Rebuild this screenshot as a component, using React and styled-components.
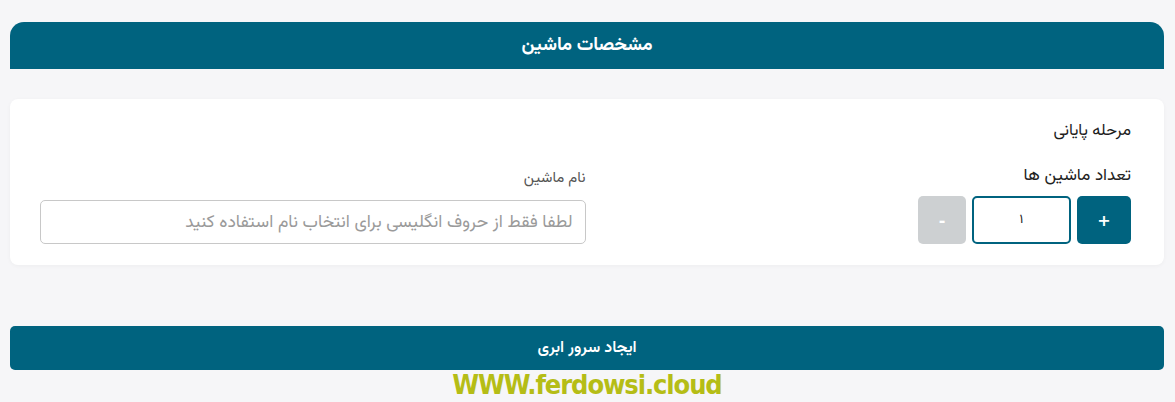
import React, { useState } from 'react'
import styled, { createGlobalStyle } from 'styled-components';

const GlobalStyle = createGlobalStyle`
    body {
        margin: 0;
        background-color: #f6f6f8;
        font-family: 'Vazirmatn', 'DejaVu Sans', 'Noto Sans', sans-serif;
    }
`;

const PageContainer = styled.div`
    direction: rtl;
    padding: 22px 11px 0 10px;
    box-sizing: border-box;
    width: 1175px;
`;

const SectionHeader = styled.div`
    height: 47px;
    background-color: #00637f;
    border-radius: 14px 14px 0 0;
    display: flex;
    align-items: center;
    justify-content: center;
    color: #ffffff;
    font-size: 18.5px;
    font-weight: 700;
`;

const Card = styled.div`
    margin-top: 30px;
    background-color: #ffffff;
    border-radius: 8px;
    box-shadow: 0 1px 4px rgba(0, 0, 0, 0.04);
    padding: 20px 33px 21px 30px;
`;

const StepTitle = styled.div`
    font-size: 16.5px;
    font-weight: 400;
    color: #1c1c1c;
    line-height: 24px;
    margin-bottom: 21px;
`;

const FieldsGrid = styled.div`
    display: grid;
    grid-template-columns: 1fr 1fr;
    align-items: end;
`;

const Field = styled.div`
    display: flex;
    flex-direction: column;
    align-items: stretch;
`;

const Label = styled.label`
    font-size: ${p => p.$small ? '15px' : '17px'};
    font-weight: 400;
    color: ${p => p.$small ? '#555' : '#222'};
    line-height: 24px;
    margin-bottom: ${p => p.$small ? '9px' : '8px'};
`;

const Stepper = styled.div`
    display: flex;
    gap: 6px;
`;

const StepButton = styled.button`
    width: ${p => p.$wide ? '54px' : '48px'};
    height: 48px;
    border: none;
    border-radius: 5px;
    background-color: ${p => p.$disabled ? '#cdd0d2' : '#00637f'};
    color: #ffffff;
    font-size: 16px;
    font-weight: 700;
    font-family: 'DejaVu Sans', sans-serif;
    cursor: pointer;
    padding: 0;
`;

const CountInput = styled.input`
    width: 99px;
    height: 48px;
    box-sizing: border-box;
    border: 2px solid #00637f;
    border-radius: 5px;
    text-align: center;
    font-size: 13px;
    color: #222;
    font-family: inherit;
    outline: none;
`;

const TextInput = styled.input`
    height: 44px;
    box-sizing: border-box;
    border: 1px solid #c8c8c8;
    border-radius: 5px;
    padding: 0 12px;
    font-size: 17.5px;
    font-family: inherit;
    direction: rtl;
    outline: none;
    &::placeholder {
        color: #9a9a9a;
    }
`;

const SubmitButton = styled.button`
    display: block;
    width: 100%;
    margin-top: 61px;
    height: 44px;
    border: none;
    border-radius: 5px;
    background-color: #00637f;
    color: #ffffff;
    font-size: 16px;
    font-weight: 600;
    font-family: inherit;
    cursor: pointer;
`;

const Watermark = styled.div`
    direction: ltr;
    text-align: center;
    font-family: 'DejaVu Sans Condensed', 'DejaVu Sans', sans-serif;
    font-weight: 700;
    font-size: 27px;
    letter-spacing: -1.1px;
    line-height: 28px;
    color: #b5bd16;
    margin-top: 1px;
`;

const App = () => {
    const [count, setCount] = useState(1);
    const [name, setName] = useState('');

    return (
        <>
            <GlobalStyle />
            <PageContainer>
                <SectionHeader>مشخصات ماشین</SectionHeader>

                <Card>
                    <StepTitle>مرحله پایانی</StepTitle>
                    <FieldsGrid>
                        <Field>
                            <Label>تعداد ماشین ها</Label>
                            <Stepper>
                                <StepButton $wide onClick={() => setCount(count + 1)}>+</StepButton>
                                <CountInput value={count.toLocaleString('fa-IR')} readOnly />
                                <StepButton $disabled onClick={() => setCount(Math.max(1, count - 1))}>-</StepButton>
                            </Stepper>
                        </Field>
                        <Field>
                            <Label $small>نام ماشین</Label>
                            <TextInput
                                value={name}
                                onChange={e => setName(e.target.value)}
                                placeholder="لطفا فقط از حروف انگلیسی برای انتخاب نام استفاده کنید"
                            />
                        </Field>
                    </FieldsGrid>
                </Card>

                <SubmitButton>ایجاد سرور ابری</SubmitButton>
                <Watermark>WWW.ferdowsi.cloud</Watermark>
            </PageContainer>
        </>
    )
}

export default App
